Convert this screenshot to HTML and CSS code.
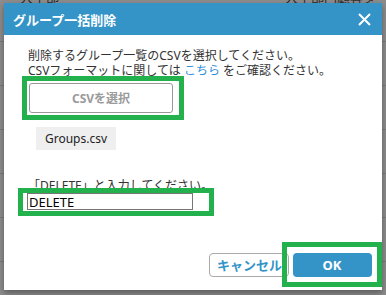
FILE: index.html
```html
<!DOCTYPE html>
<html lang="ja">

<head>
    <meta charset="UTF-8">
    <meta name="viewport" content="width=device-width, initial-scale=1.0">
    <title>グループ一括削除</title>
    <link rel="stylesheet" href="styles.css">
</head>

<body>
    <!-- Tabela por trás do modal -->
    <div class="backdrop">
        <div class="bg-row first">
            <span class="bg-cell">大学部</span>
            <span class="bg-cell">大学部門顧客ダ</span>
        </div>
        <div class="bg-row"></div>
        <div class="bg-row"></div>
        <div class="bg-row"></div>
        <div class="bg-row"></div>
        <div class="bg-row"></div>
        <div class="bg-row"></div>
    </div>

    <div class="dialog">
        <div class="dialog-header">
            <span class="dialog-title">グループ一括削除</span>
            <button type="button" class="btn-close" aria-label="閉じる">
                <svg width="13" height="13" viewBox="0 0 13 13">
                    <path d="M1 1 L12 12 M12 1 L1 12" stroke="#fff" stroke-width="2" fill="none" />
                </svg>
            </button>
        </div>

        <div class="dialog-body">
            <p class="desc">
                削除するグループ一覧のCSVを選択してください。<br>
                CSVフォーマットに関しては <a href="#" class="link">こちら</a> をご確認ください。
            </p>

            <div class="mark mark-select">
                <button type="button" class="btn-select">CSVを選択</button>
            </div>

            <div class="file-chip">Groups.csv</div>

            <p class="label">「DELETE」と入力してください。</p>
            <div class="mark mark-input">
                <input type="text" class="confirm-input" value="DELETE">
            </div>
        </div>

        <div class="dialog-footer">
            <button type="button" class="btn-cancel">キャンセル</button>
            <div class="mark mark-ok">
                <button type="button" class="btn-ok">OK</button>
            </div>
        </div>
    </div>
</body>

</html>
```

FILE: styles.css
```css
/* Reset básico */
* {
    margin: 0;
    padding: 0;
    box-sizing: border-box;
    font-family: "Noto Sans", "Noto Sans CJK JP", sans-serif;
}

body {
    background-color: #8c8c8c;
    width: 386px;
    height: 295px;
    overflow: hidden;
    position: relative;
}

/* Fundo */
.backdrop {
    margin-top: -12px;
}

.bg-row {
    height: 44px;
    border-bottom: 1px solid #7a7a7a;
}

.bg-row.first {
    height: 54px;
    display: flex;
    justify-content: space-between;
    padding: 0 10px 0 20px;
    font-size: 13px;
    line-height: 18px;
    color: #2a2a2a;
}

/* Modal */
.dialog {
    position: absolute;
    left: 4px;
    top: 3px;
    width: 378px;
    height: 287px;
    background-color: #fff;
    box-shadow: 0 3px 6px rgba(0, 0, 0, 0.35);
    display: flex;
    flex-direction: column;
}

.dialog-header {
    height: 32px;
    background-color: #3494c7;
    display: flex;
    align-items: center;
    justify-content: space-between;
    padding: 0 11px 0 9px;
}

.dialog-title {
    color: #fff;
    font-size: 13px;
    font-weight: bold;
}

.btn-close {
    background: none;
    border: none;
    width: 13px;
    height: 13px;
    display: flex;
}

.dialog-body {
    flex: 1;
    padding-left: 18px;
    color: #333;
    font-size: 12px;
}

.desc {
    margin-top: 13px;
    padding-left: 6px;
    line-height: 15px;
}

.link {
    color: #2f8fdc;
    text-decoration: none;
}

/* Marcações verdes */
.mark {
    border: 5px solid #22b14c;
    position: relative;
}

.mark-select {
    margin-top: -2px;
    width: 162px;
    height: 44px;
}

.btn-select {
    margin: 2px 0 0 2px;
    width: 144px;
    height: 30px;
    background-color: #fff;
    border: 1px solid #999;
    border-radius: 3px;
    color: #9a9a9a;
    font-size: 12px;
    font-weight: bold;
}

.file-chip {
    margin: 7px 0 0 14px;
    width: 80px;
    height: 23px;
    line-height: 23px;
    background-color: #efefef;
    text-align: center;
    font-size: 12px;
    color: #222;
}

.label {
    margin-top: 28px;
    padding-left: 6px;
    line-height: 15px;
}

.mark-input {
    margin: -5px 0 0 -4px;
    width: 196px;
    height: 28px;
}

.confirm-input {
    display: block;
    margin-left: 4px;
    width: 166px;
    height: 17px;
    border: 1px solid #767676;
    padding: 0 1px;
    font-size: 13px;
    color: #000;
    outline: none;
}

/* Rodapé */
.dialog-footer {
    display: flex;
    justify-content: flex-end;
    align-items: center;
    padding-bottom: 3px;
}

.btn-cancel {
    width: 80px;
    height: 24px;
    background-color: #fff;
    border: 1px solid #aaa;
    border-radius: 4px;
    color: #3494c7;
    font-size: 13px;
    font-weight: bold;
    text-align: left;
    padding-left: 7px;
    margin-right: -7px;
}

.mark-ok {
    width: 100px;
    height: 45px;
    display: flex;
    align-items: center;
    justify-content: center;
}

.btn-ok {
    width: 79px;
    height: 24px;
    background-color: #3494c7;
    border: none;
    border-radius: 4px;
    color: #fff;
    font-size: 13px;
    font-weight: bold;
}
```
